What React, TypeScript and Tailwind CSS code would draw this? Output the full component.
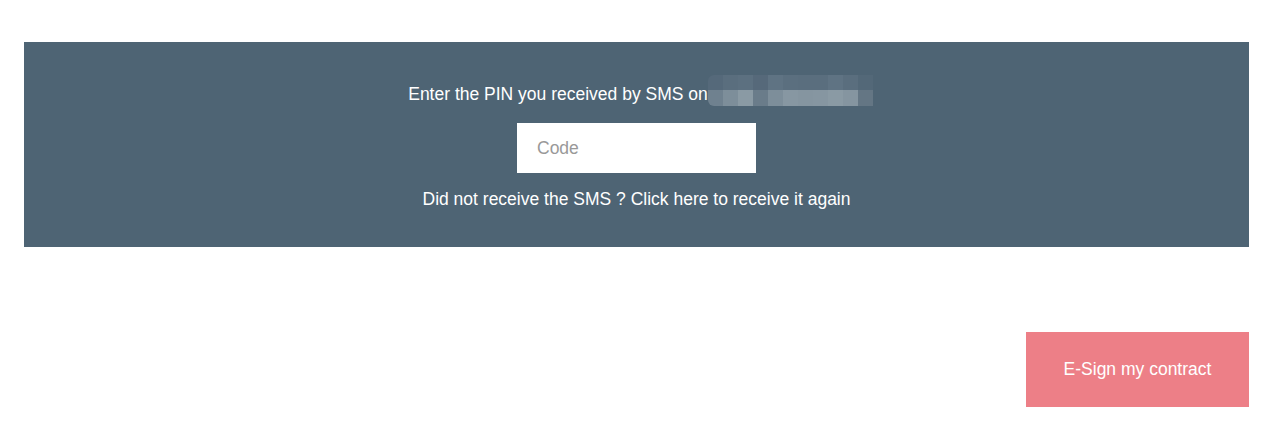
const topTiles = ["#55697a", "#5a6e7e", "#5c7080", "#56697a", "#5f7383", "#5b6f7f", "#5a6e7e", "#5a6e7e", "#5f7383", "#5a6e7e", "#536878"];
const bottomTiles = ["#6f818f", "#7d8e9a", "#8a9aa4", "#6a7c8a", "#7d8e9a", "#8797a2", "#8595a0", "#8696a1", "#8a9aa4", "#8595a0", "#647684"];

function BlurredNumber() {
  // phone number is pixelated in the source, so we fake the mosaic
  return (
    <span className="inline-flex flex-col overflow-hidden rounded-l-[6px]">
      <span className="flex">
        {topTiles.map((c, i) => (
          <span key={i} className="block h-[15px] w-[15px]" style={{ backgroundColor: c }} />
        ))}
      </span>
      <span className="flex">
        {bottomTiles.map((c, i) => (
          <span key={i} className="block h-[16px] w-[15px]" style={{ backgroundColor: c }} />
        ))}
      </span>
    </span>
  );
}

export default function App() {
  return (
    <div className="min-h-[429px] bg-white pl-[24px] pr-[17px] pt-[42px] font-['Liberation_Sans',Arial,sans-serif]">
      <div className="flex h-[205px] flex-col items-center bg-[#4e6474] pt-[33px] text-[17.5px] text-white">
        <div className="flex h-[31px] items-center pl-[8px]">
          <span className="pt-[8px]">Enter the PIN you received by SMS on</span>
          <BlurredNumber />
        </div>
        <input
          type="text"
          placeholder="Code"
          className="mt-[17px] h-[50px] w-[239px] bg-white px-[20px] text-[17.5px] text-gray-800 outline-none placeholder:text-[#999999]"
        />
        <p className="mt-[16px] leading-[20px]">Did not receive the SMS ? Click here to receive it again</p>
      </div>
      <div className="flex justify-end pt-[85px]">
        <button
          type="button"
          className="h-[75px] w-[223px] bg-[#ed7f87] text-[17.5px] text-white"
        >
          E-Sign my contract
        </button>
      </div>
    </div>
  );
}
